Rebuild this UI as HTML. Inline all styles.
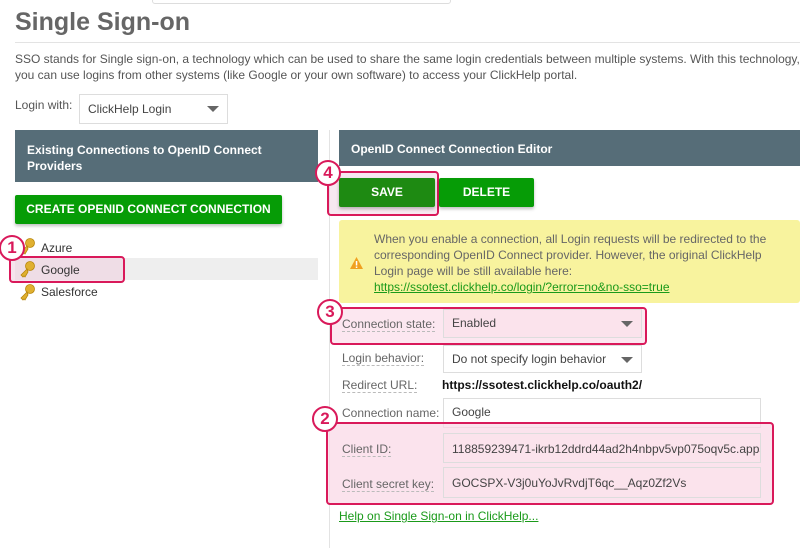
<!DOCTYPE html>
<html><head><meta charset="utf-8"><style>
*{margin:0;padding:0;box-sizing:border-box}
body{width:804px;height:548px;overflow:hidden;background:#fff;font-family:"Liberation Sans",sans-serif;font-size:12px;color:#555;position:relative}
.a{position:absolute}
.hdr{background:#566d78;color:#fff;font-weight:bold;font-size:12px}
.btn{background:#069c06;color:#fff;font-weight:bold;font-size:12px;text-align:center;box-shadow:0 2px 3px rgba(0,0,0,.25);border-radius:2px}
.box{border:2px solid #d9195a;border-radius:4px}
.circ{width:26px;height:26px;border:2.5px solid #d9195a;border-radius:50%;background:#fff;color:#d9195a;font-weight:bold;font-size:17px;text-align:center;line-height:21px}
.inp{border:1px solid #ddd;background:#fff;font-size:12px;color:#444;padding-left:8px;line-height:27px;white-space:nowrap;overflow:hidden}
.lbl{font-size:12px;color:#666;border-bottom:1px dashed #bbb;line-height:14px}
.arr{position:absolute;right:8px;top:11px;width:0;height:0;border-left:6px solid transparent;border-right:6px solid transparent;border-top:6px solid #666}
</style></head><body>
<div class="a" style="left:152px;top:-2px;width:299px;height:6px;border:1px solid #ddd;border-radius:3px"></div>
<div class="a" style="left:15px;top:8px;font-size:25px;font-weight:bold;color:#666">Single Sign-on</div>
<div class="a" style="left:15px;top:42px;width:785px;height:1px;background:#e3e3e3"></div>
<div class="a" style="left:15px;top:51px;line-height:16px;width:790px">SSO stands for Single sign-on, a technology which can be used to share the same login credentials between multiple systems. With this technology,<br>you can use logins from other systems (like Google or your own software) to access your ClickHelp portal.</div>
<div class="a" style="left:15px;top:98px">Login with:</div>
<div class="a inp" style="left:79px;top:94px;width:149px;height:30px;line-height:28px">ClickHelp Login<div class="arr"></div></div>

<div class="a hdr" style="left:15px;top:130px;width:303px;height:52px;padding:12px 12px;line-height:16px">Existing Connections to OpenID Connect Providers</div>
<div class="a" style="left:329px;top:130px;width:1px;height:418px;background:#e3e3e3"></div>
<div class="a btn" style="left:15px;top:195px;width:267px;height:29px;line-height:29px">CREATE OPENID CONNECT CONNECTION</div>
<div class="a" style="left:15px;top:258px;width:303px;height:22px;background:#eee"></div>
<div class="a box" style="left:9px;top:256px;width:116px;height:27px;background:rgba(240,210,225,.6)"></div>
<svg class="a" style="left:19px;top:237px" width="18" height="64" viewBox="0 0 18 64">
<g fill="#e0b030" stroke="#b8860b" stroke-width=".8">
<circle cx="11" cy="6" r="4.5"/><path d="M8 9 L2 15 L4 17 L5 16 L6 17 L9 12Z"/>
<circle cx="11" cy="29" r="4.5"/><path d="M8 32 L2 38 L4 40 L5 39 L6 40 L9 35Z"/>
<circle cx="11" cy="52" r="4.5"/><path d="M8 55 L2 61 L4 63 L5 62 L6 63 L9 58Z"/></g></svg>
<div class="a" style="left:41px;top:241px;color:#333">Azure</div>
<div class="a" style="left:41px;top:263px;color:#333">Google</div>
<div class="a" style="left:41px;top:285px;color:#333">Salesforce</div>
<div class="a circ" style="left:-1px;top:235px">1</div>

<div class="a hdr" style="left:339px;top:130px;width:461px;height:36px;padding-left:12px;line-height:38px">OpenID Connect Connection Editor</div>
<div class="a box" style="left:327px;top:171px;width:112px;height:45px;background:rgba(240,210,225,.5)"></div>
<div class="a btn" style="left:339px;top:178px;width:96px;height:29px;line-height:29px;background:#1e8a12">SAVE</div>
<div class="a btn" style="left:439px;top:178px;width:95px;height:29px;line-height:29px">DELETE</div>
<div class="a circ" style="left:315px;top:160px">4</div>
<div class="a" style="left:339px;top:220px;width:461px;height:83px;background:#f8f39e;border-radius:3px"></div>
<svg class="a" style="left:349px;top:256px" width="15" height="14" viewBox="0 0 15 14"><path d="M7.5 1 L14 13 L1 13Z" fill="#f0a020"/><rect x="6.8" y="5" width="1.5" height="4.5" fill="#fff"/><rect x="6.8" y="10.5" width="1.5" height="1.5" fill="#fff"/></svg>
<div class="a" style="left:374px;top:231px;line-height:16px;color:#666">When you enable a connection, all Login requests will be redirected to the<br>corresponding OpenID Connect provider. However, the original ClickHelp<br>Login page will be still available here:<br><span style="color:#1a9a1a;text-decoration:underline">https://ssotest.clickhelp.co/login/?error=no&amp;no-sso=true</span></div>

<div class="a box" style="left:330px;top:307px;width:317px;height:38px;background:rgba(250,215,230,.6)"></div>
<div class="a lbl" style="left:342px;top:317px">Connection state:</div>
<div class="a inp" style="left:443px;top:309px;width:199px;height:29px;background:#fbe3ec">Enabled<div class="arr"></div></div>
<div class="a circ" style="left:317px;top:299px">3</div>
<div class="a lbl" style="left:342px;top:351px">Login behavior:</div>
<div class="a inp" style="left:443px;top:345px;width:199px;height:28px">Do not specify login behavior<div class="arr"></div></div>
<div class="a lbl" style="left:342px;top:378px">Redirect URL:</div>
<div class="a" style="left:442px;top:378px;font-weight:bold;color:#111">https://ssotest.clickhelp.co/oauth2/</div>
<div class="a lbl" style="left:342px;top:406px;border:none">Connection name:</div>
<div class="a inp" style="left:443px;top:398px;width:318px;height:30px">Google</div>
<div class="a box" style="left:326px;top:422px;width:448px;height:83px;background:rgba(250,215,230,.7)"></div>
<div class="a lbl" style="left:342px;top:442px">Client ID:</div>
<div class="a inp" style="left:443px;top:433px;width:318px;height:30px;background:#fbe3ec;line-height:30px">118859239471-ikrb12ddrd44ad2h4nbpv5vp075oqv5c.apps</div>
<div class="a lbl" style="left:342px;top:477px">Client secret key:</div>
<div class="a inp" style="left:443px;top:467px;width:318px;height:31px;background:#fbe3ec;line-height:30px">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</div>
<div class="a circ" style="left:312px;top:406px">2</div>
<div class="a" style="left:339px;top:509px;color:#1a9a1a;text-decoration:underline">Help on Single Sign-on in ClickHelp...</div>
</body></html>
